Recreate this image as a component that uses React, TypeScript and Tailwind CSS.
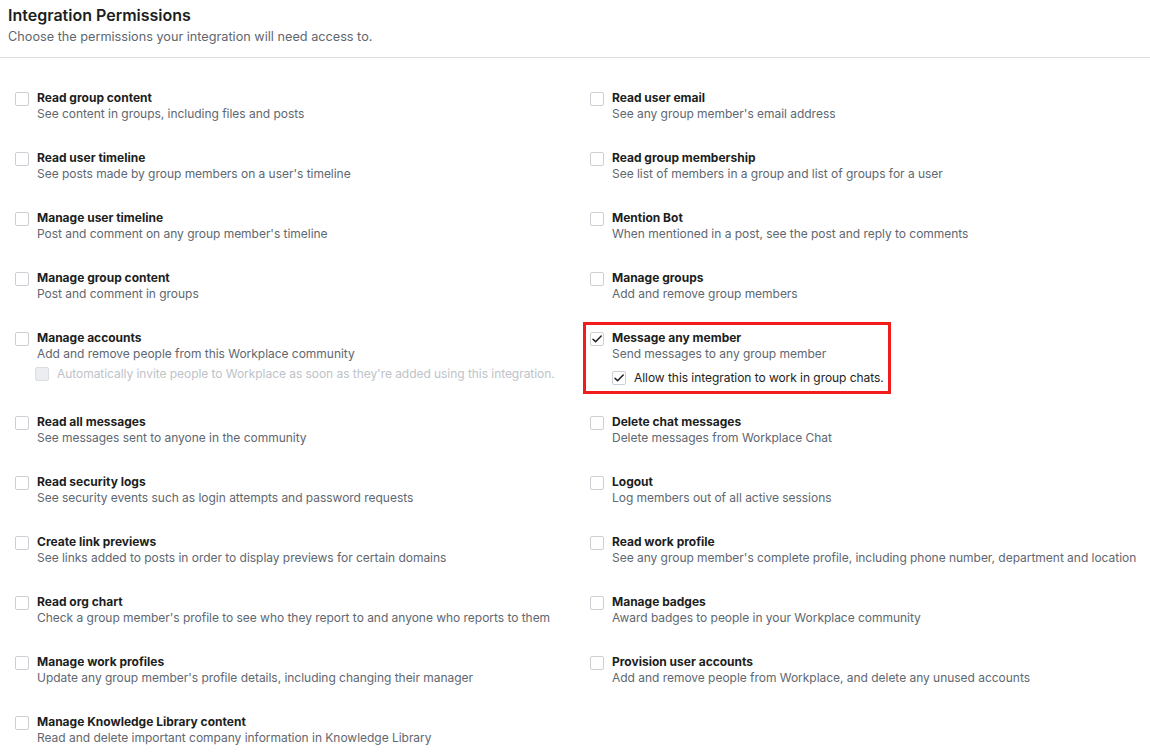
import React from 'react';

interface Perm {
  title: string;
  desc: string;
  checked?: boolean;
  sub?: { label: string; checked?: boolean; disabled?: boolean };
  highlight?: boolean;
}

const left: Perm[] = [
  { title: 'Read group content', desc: 'See content in groups, including files and posts' },
  { title: 'Read user timeline', desc: "See posts made by group members on a user's timeline" },
  { title: 'Manage user timeline', desc: "Post and comment on any group member's timeline" },
  { title: 'Manage group content', desc: 'Post and comment in groups' },
  {
    title: 'Manage accounts',
    desc: 'Add and remove people from this Workplace community',
    sub: {
      label: "Automatically invite people to Workplace as soon as they're added using this integration.",
      disabled: true,
    },
  },
  { title: 'Read all messages', desc: 'See messages sent to anyone in the community' },
  { title: 'Read security logs', desc: 'See security events such as login attempts and password requests' },
  { title: 'Create link previews', desc: 'See links added to posts in order to display previews for certain domains' },
  { title: 'Read org chart', desc: "Check a group member's profile to see who they report to and anyone who reports to them" },
  { title: 'Manage work profiles', desc: "Update any group member's profile details, including changing their manager" },
  { title: 'Manage Knowledge Library content', desc: 'Read and delete important company information in Knowledge Library' },
];

const right: Perm[] = [
  { title: 'Read user email', desc: "See any group member's email address" },
  { title: 'Read group membership', desc: 'See list of members in a group and list of groups for a user' },
  { title: 'Mention Bot', desc: 'When mentioned in a post, see the post and reply to comments' },
  { title: 'Manage groups', desc: 'Add and remove group members' },
  {
    title: 'Message any member',
    desc: 'Send messages to any group member',
    checked: true,
    highlight: true,
    sub: { label: 'Allow this integration to work in group chats.', checked: true },
  },
  { title: 'Delete chat messages', desc: 'Delete messages from Workplace Chat' },
  { title: 'Logout', desc: 'Log members out of all active sessions' },
  { title: 'Read work profile', desc: "See any group member's complete profile, including phone number, department and location" },
  { title: 'Manage badges', desc: 'Award badges to people in your Workplace community' },
  { title: 'Provision user accounts', desc: 'Add and remove people from Workplace, and delete any unused accounts' },
];

function Box({ checked, disabled }: { checked?: boolean; disabled?: boolean }) {
  return (
    <span
      className={`flex h-[14px] w-[14px] flex-shrink-0 items-center justify-center rounded-[2px] border ${
        disabled ? 'border-[#dadde1] bg-[#ebedf0]' : 'border-[#ccd0d5] bg-white'
      }`}
    >
      {checked && (
        <svg width="12" height="12" viewBox="0 0 12 12" fill="none">
          <path d="M2 6.2 L4.6 8.8 L10.2 3" stroke="#1c1e21" strokeWidth="1.5" strokeLinecap="round" strokeLinejoin="round" />
        </svg>
      )}
    </span>
  );
}

function Item({ p, side }: { p: Perm; side: 'l' | 'r' }) {
  return (
    <div className="relative flex gap-2 pl-[15px]">
      {p.highlight && (
        <div className="pointer-events-none absolute left-[8px] top-[-8px] h-[72px] w-[308px] border-[3px] border-[#f21c1c]" />
      )}
      <div className="mt-[2px]">
        <Box checked={p.checked} />
      </div>
      <div className="flex flex-col">
        <div className="text-[12px] font-bold leading-4 text-[#1c1e21]">{p.title}</div>
        <div className="text-[12px] leading-4 tracking-[-0.03px] text-[#606770]">{p.desc}</div>
        {p.sub && (
          <div className={`flex items-center gap-2 ${side === 'r' ? 'mt-2' : 'mt-1 -ml-[2px]'}`}>
            <Box checked={p.sub.checked} disabled={p.sub.disabled} />
            <span
              className={`text-[12px] leading-4 tracking-[-0.05px] ${
                p.sub.disabled ? 'text-[#bec3c9]' : 'text-[#1c1e21]'
              }`}
            >
              {p.sub.label}
            </span>
          </div>
        )}
      </div>
    </div>
  );
}

export default function App() {
  const rows = Math.max(left.length, right.length);
  return (
    <div className="h-[753px] w-[1150px] overflow-hidden bg-white font-['Inter','Liberation_Sans',Arial,sans-serif]">
      {/* Header */}
      <div className="px-2 pt-[5px]">
        <h1 className="text-[16px] font-semibold leading-5 text-[#1c1e21]">Integration Permissions</h1>
        <p className="mt-[4px] text-[12.7px] leading-4 text-[#606770]">
          Choose the permissions your integration will need access to.
        </p>
      </div>
      <div className="mt-[12px] h-px bg-[#dadde1]" />

      {/* Permission grid */}
      <div className="mt-[32px] grid grid-cols-[575px_575px] gap-y-[28px]">
        {Array.from({ length: rows }).map((_, i) => (
          <React.Fragment key={i}>
            {left[i] ? <Item p={left[i]} side="l" /> : <div />}
            {right[i] ? <Item p={right[i]} side="r" /> : <div />}
          </React.Fragment>
        ))}
      </div>
    </div>
  );
}
